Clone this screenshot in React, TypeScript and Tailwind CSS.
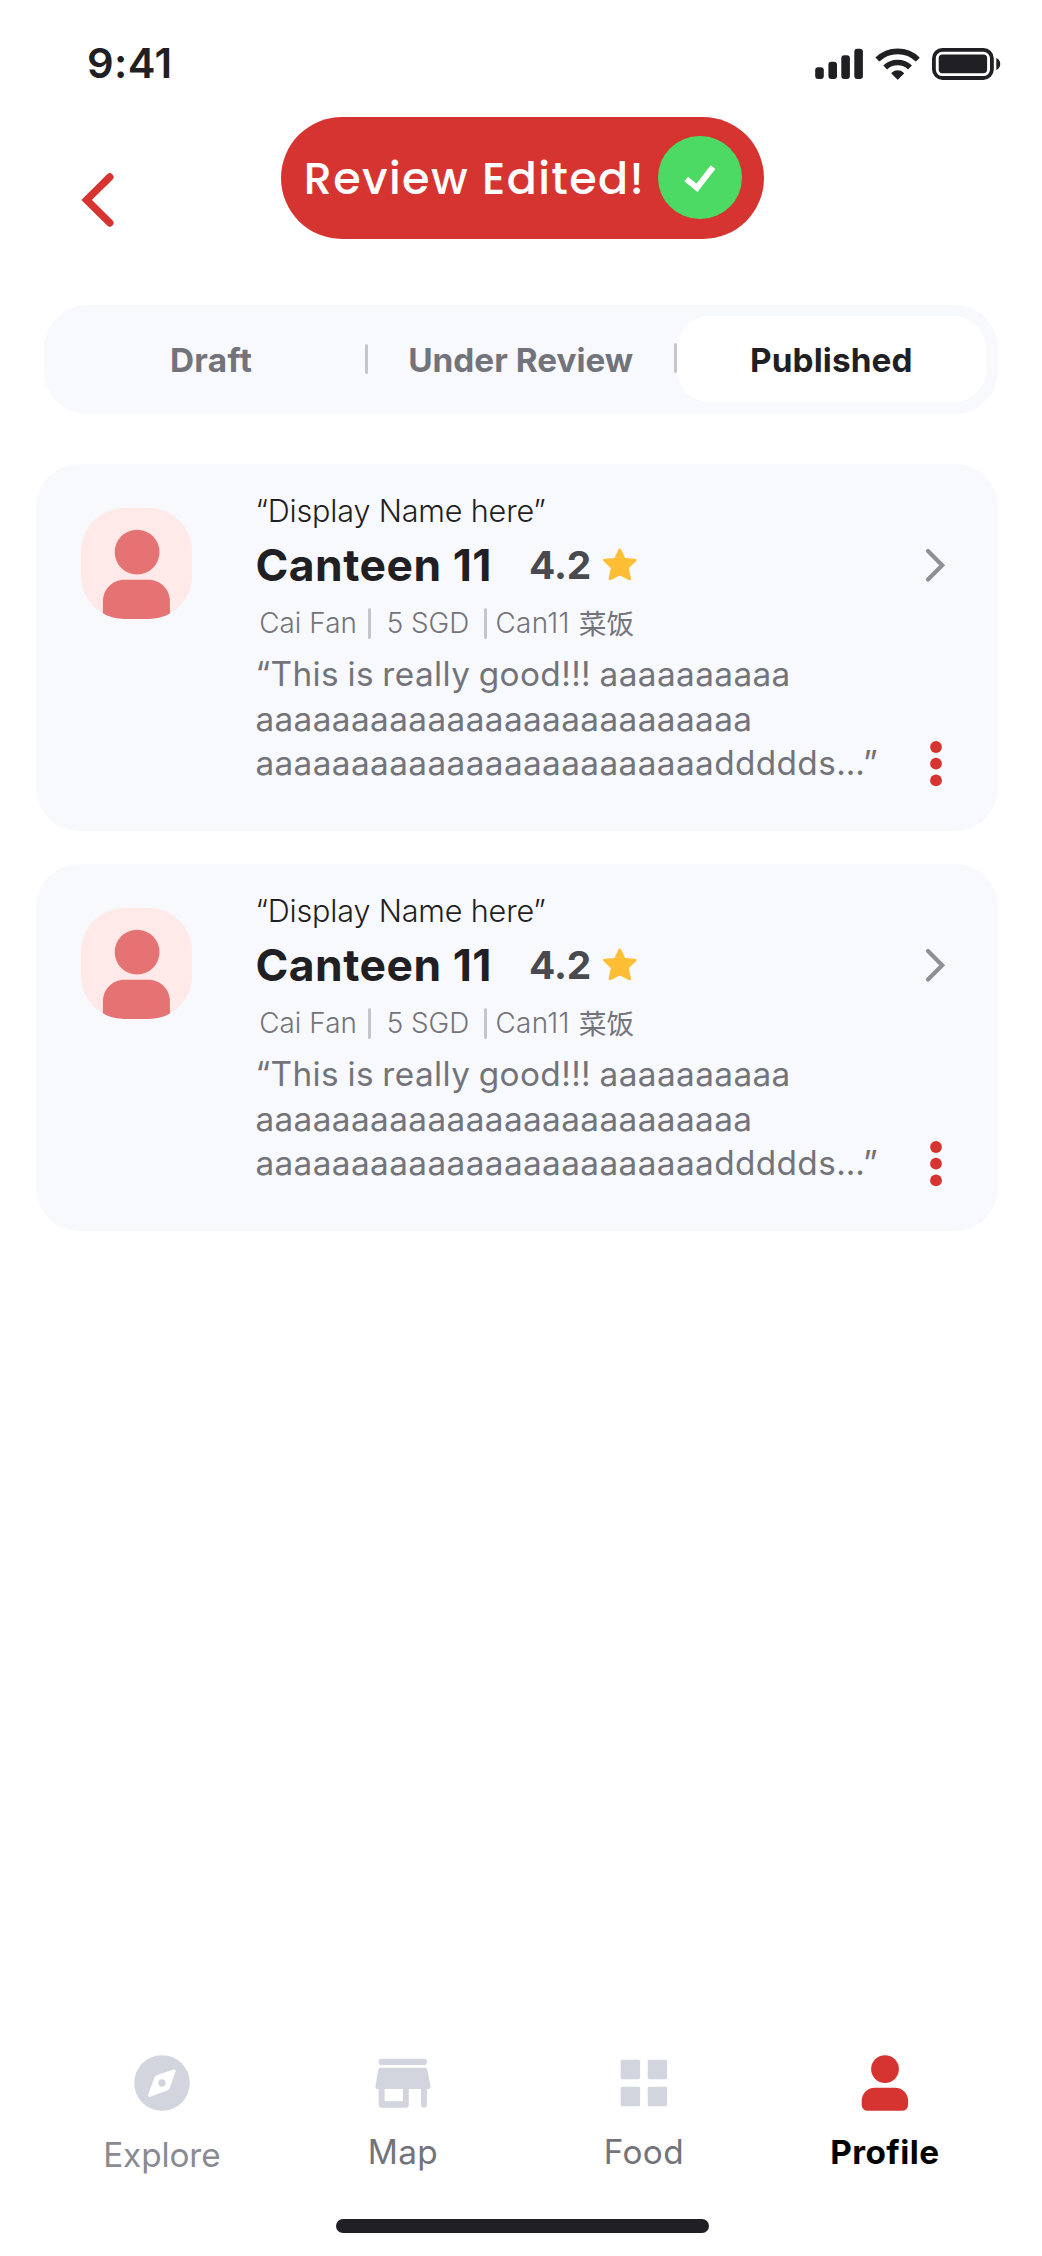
import type { ReactNode } from "react";

function StatusBar() {
  return (
    <div className="flex h-[116.5px] items-start justify-between pl-[87px] pr-[38.6px] pt-[38px]">
      <span className="text-[41.67px] leading-[50px] font-semibold tracking-[0.4px]">9:41</span>
      <div className="flex pt-[8px]">
        <svg width="51" height="36" viewBox="0 0 51 36" fill="currentColor">
          <rect x="0.2" y="21.2" width="8.6" height="11.8" rx="3" />
          <rect x="13.4" y="15.8" width="8.6" height="17.2" rx="3" />
          <rect x="26.3" y="9.3" width="8.6" height="23.7" rx="3" />
          <rect x="39.3" y="2.8" width="8.6" height="30.2" rx="3" />
        </svg>
        <svg className="ml-[8px]" width="48" height="36" viewBox="0 0 48 36" fill="none" stroke="currentColor">
          <path d="M3.4 13.6C14.5 2.6 32.9 2.6 43.8 13.6" strokeWidth="5.6" />
          <path d="M11.2 21.4C18 14.9 29.4 14.9 36 21.4" strokeWidth="5.6" />
          <path d="M18.2 27.3C21.4 24.4 26 24.4 29.2 27.3L23.7 32.8Z" fill="currentColor" strokeWidth="1.6" strokeLinejoin="round" />
        </svg>
        <svg className="ml-[10px]" width="71" height="36" viewBox="0 0 71 36" fill="currentColor">
          <rect x="1.9" y="3.8" width="58" height="28.2" rx="8.5" fill="none" stroke="currentColor" strokeWidth="3.8" />
          <rect x="6.7" y="8.6" width="48.4" height="18.6" rx="3.6" />
          <path d="M64.3 12C69.6 13.8 69.6 22.2 64.3 24Z" />
        </svg>
      </div>
    </div>
  );
}

function Header() {
  return (
    <div className="flex h-[188.2px] items-start">
      <svg className="ml-[78px] mt-[53.5px] w-[40px]" width="40" height="60" viewBox="0 0 40 60" fill="none" stroke="#D63430" strokeWidth="7.4" strokeLinecap="round">
        <path d="M31.8 7L8.6 29.9L31.8 52.8" />
      </svg>
      <div className="ml-[162.5px] flex h-[122.2px] w-[483.6px] items-center rounded-full bg-[#D63430] pl-[23.2px]">
        <span className="mt-[2px] w-[354.4px] whitespace-nowrap font-[Poppins,Inter,sans-serif] text-[44.44px] leading-[62px] font-medium tracking-[1.4px] text-white">
          Review Edited!
        </span>
        <div className="flex h-[83.6px] w-[83.6px] items-center justify-center rounded-full bg-[#4CD964]">
          <svg width="34" height="30" viewBox="0 0 34 30" fill="none" stroke="#fff" strokeWidth="6" strokeLinejoin="miter">
            <path d="M3.2 16L14 24.8L30 4.2" strokeLinecap="butt" />
          </svg>
        </div>
      </div>
    </div>
  );
}

function Tabs() {
  return (
    <div className="ml-[44px] flex h-[109px] w-[953.6px] items-center rounded-[43px] bg-[#F8F9FD] px-[11.6px] text-[33.33px] leading-[44px] font-bold text-[#73747B]">
      <div className="mt-[1px] w-[309px] pl-[2px] text-center tracking-[0.3px]">Draft</div>
      <div className="h-[30.6px] w-[3px] rounded-full bg-[#C5C6CC]" />
      <div className="mt-[1px] w-[306.4px] text-center tracking-[0px]">Under Review</div>
      <div className="mt-[-2px] h-[30.6px] w-[2.8px] rounded-full bg-[#C5C6CC]" />
      <div className="flex h-[85.6px] w-[309.4px] items-center justify-center rounded-[32px] bg-white pt-[1px] tracking-[0.1px] text-[#1F1F24]">
        Published
      </div>
    </div>
  );
}

function Avatar() {
  return (
    <svg className="mt-[44px] h-[111px] w-[111px] shrink-0 overflow-hidden rounded-[43px]" viewBox="0 0 111 111">
      <rect width="111" height="111" fill="#FFE9E9" />
      <circle cx="56.1" cy="44.1" r="22.4" fill="#E57373" />
      <path d="M21.9 111V93.4C21.9 81.4 31.4 71.7 43.4 71.7H67.4C79.4 71.7 88.9 81.4 88.9 93.4V111Z" fill="#E57373" />
    </svg>
  );
}

function Divider() {
  return <span className="h-[30.6px] w-[3px] rounded-full bg-[#C5C6CC]" />;
}

function ReviewCard() {
  return (
    <article className="ml-[36px] flex h-[366.7px] w-[961.5px] items-start rounded-[43px] bg-[#F8F9FD] pl-[44.6px]">
      <Avatar />
      <div className="ml-[63.8px] w-[668px] pt-[28px]">
        <div className="h-[38px] text-[30.56px] leading-[38px] font-light tracking-[-0.16px]">“Display Name here”</div>
        <div className="mt-[6.6px] flex h-[56px] items-center">
          <h2 className="w-[273.5px] text-[44.44px] leading-[56px] font-bold tracking-[0.5px]">Canteen 11</h2>
          <span className="mt-[1px] w-[74px] text-[38.9px] leading-[50px] font-bold text-[#494A50]">4.2</span>
          <svg width="34" height="33" viewBox="0 0 34 33" fill="#FFBE35">
            <path d="M15.4 1.6C16 .2 17.6 .2 18.2 1.6L22.1 9.9L32.1 10.7C33.6 10.9 34 12.2 33 13.2L25.7 20.3L28 30.3C28.2 31.9 27 32.6 25.7 31.9L16.8 27.5L7.8 31.9C6.5 32.6 5.3 31.8 5.6 30.3L7.9 20.3L.6 13.2C-.4 12.2 0 10.9 1.5 10.7L11.5 9.9Z" />
          </svg>
        </div>
        <div className="mt-[14.7px] flex h-[32px] items-center whitespace-nowrap text-[27.78px] leading-[32px] font-light text-[#73747B]">
          <span className="ml-[3.8px] w-[108.6px] tracking-[0.1px]">Cai Fan</span>
          <Divider />
          <span className="ml-[16px] w-[97.6px] tracking-[0px]">5 SGD</span>
          <Divider />
          <span className="ml-[8px] w-[83.4px] tracking-[0.4px]">Can11</span>
          <span className="mt-[-3px] font-['Noto_Sans_CJK_SC',sans-serif] font-normal">菜饭</span>
        </div>
        <p className="mt-[12.8px] whitespace-nowrap text-[33.33px] leading-[44.45px] tracking-[0.4px] text-[#73747B] [word-spacing:-1.3px]">
          “This is really good!!! aaaaaaaaaa
          <br />
          aaaaaaaaaaaaaaaaaaaaaaaaaa
          <br />
          aaaaaaaaaaaaaaaaaaaaaaaaddddds<span className="tracking-[0px]">...”</span>
        </p>
      </div>
      <div className="flex flex-col items-center pt-[83px]">
        <svg width="26" height="38" viewBox="0 0 26 38" fill="none" stroke="#8F9095" strokeWidth="4.2" strokeLinecap="round">
          <path d="M5 4L19.2 18.3L5 32.6" />
        </svg>
        <svg className="mt-[155px]" width="14" height="48" viewBox="0 0 14 48" fill="#D63430">
          <circle cx="7" cy="7" r="5.9" />
          <circle cx="7" cy="23.7" r="5.9" />
          <circle cx="7" cy="40.4" r="5.9" />
        </svg>
      </div>
    </article>
  );
}

function NavItem({ icon, label, style }: { icon: ReactNode; label: string; style: string }) {
  return (
    <div className="flex flex-col items-center">
      {icon}
      <span className={`text-[33.33px] leading-[44px] ${style}`}>{label}</span>
    </div>
  );
}

function BottomNav() {
  return (
    <nav className="ml-[41.4px] grid w-[964px] grid-cols-4">
      <NavItem
        label="Explore"
        style="mt-[21.8px] tracking-[-0.1px] text-[#8A8B92]"
        icon={
          <svg width="56" height="56" viewBox="0 0 56 56">
            <circle cx="28" cy="28" r="27.8" fill="#D2D5DD" />
            <path d="M14.2 39.4L20.6 22.4Q21.2 20.9 22.7 20.3L39.4 14.5Q42.3 13.9 41.6 16.7L35.6 33.2Q35 34.8 33.4 35.4L16.7 41.6Q13.6 42.2 14.2 39.4Z" fill="#fff" />
            <circle cx="28" cy="28" r="3.7" fill="#D2D5DD" />
          </svg>
        }
      />
      <NavItem
        label="Map"
        style="mt-[19px] tracking-[0.3px] text-[#73747B]"
        icon={
          <svg width="56" height="56" viewBox="0 0 56 56" fill="#D2D5DD">
            <rect x="3.6" y="3.8" width="48.4" height="6.2" rx="3.1" />
            <path fillRule="evenodd" d="M5.4 12.8H50Q51.8 12.8 52.3 14.8L55.6 31.5Q55.7 34 53.5 34H52V49.6A3.05 3.05 0 0 1 45.9 49.6V34H33.8V49.6Q33.8 52.7 30.8 52.7H6.6Q3.6 52.7 3.6 49.6V34H2.4Q.2 34 .4 31.5L3.3 14.8Q3.8 12.8 5.4 12.8ZM9.6 34V46.3H27.9V34Z" />
          </svg>
        }
      />
      <NavItem
        label="Food"
        style="mt-[19px] tracking-[0.4px] text-[#73747B]"
        icon={
          <svg width="56" height="56" viewBox="0 0 56 56" fill="#D2D5DD">
            <rect x="4.7" y="4.8" width="19.4" height="19.4" rx="1.4" />
            <rect x="31.7" y="4.8" width="19.4" height="19.4" rx="1.4" />
            <rect x="4.7" y="31.8" width="19.4" height="19.4" rx="1.4" />
            <rect x="31.7" y="31.8" width="19.4" height="19.4" rx="1.4" />
          </svg>
        }
      />
      <NavItem
        label="Profile"
        style="mt-[19px] font-bold tracking-[0.4px] text-black"
        icon={
          <svg width="56" height="56" viewBox="0 0 56 56" fill="#D63430">
            <circle cx="28" cy="14.1" r="13.9" />
            <path d="M17.6 32.8H38.2C45.4 32.8 51.1 38.6 51.1 45.8V49.2Q51.1 55.8 44.6 55.8H11.2Q4.7 55.8 4.7 49.2V45.8C4.7 38.6 10.4 32.8 17.6 32.8Z" />
          </svg>
        }
      />
    </nav>
  );
}

export default function App() {
  return (
    <main className="flex h-[2256px] w-[1042px] flex-col overflow-hidden bg-white font-['Inter',sans-serif] text-[#1F1F24]">
      <StatusBar />
      <Header />
      <Tabs />
      <section className="mt-[50.3px] flex flex-col gap-[33.3px]">
        <ReviewCard />
        <ReviewCard />
      </section>
      <footer className="mt-auto h-[200.8px]">
        <BottomNav />
        <div className="ml-[336px] mt-[41.6px] h-[14.4px] w-[372.5px] rounded-full bg-[#1F1F24]" />
      </footer>
    </main>
  );
}
